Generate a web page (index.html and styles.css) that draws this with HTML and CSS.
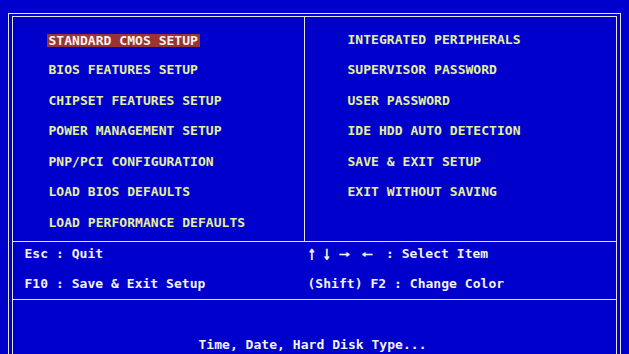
FILE: index.html
```html
<!DOCTYPE html>
<html lang="en">
<head>
    <meta charset="UTF-8">
    <title>CMOS Setup Utility</title>
    <link rel="stylesheet" href="styles.css">
</head>
<body>
    <div class="frame-outer">
        <div class="frame-inner">
            <div class="menu">
                <ul class="menu-col menu-left">
                    <li><span class="selected">STANDARD CMOS SETUP</span></li>
                    <li>BIOS FEATURES SETUP</li>
                    <li>CHIPSET FEATURES SETUP</li>
                    <li>POWER MANAGEMENT SETUP</li>
                    <li>PNP/PCI CONFIGURATION</li>
                    <li>LOAD BIOS DEFAULTS</li>
                    <li>LOAD PERFORMANCE DEFAULTS</li>
                </ul>
                <ul class="menu-col menu-right">
                    <li>INTEGRATED PERIPHERALS</li>
                    <li>SUPERVISOR PASSWORD</li>
                    <li>USER PASSWORD</li>
                    <li>IDE HDD AUTO DETECTION</li>
                    <li>SAVE &amp; EXIT SETUP</li>
                    <li>EXIT WITHOUT SAVING</li>
                </ul>
            </div>
            <div class="keys">
                <div class="key">Esc : Quit</div>
                <div class="key"><span class="arr arr-v">↑</span> <span class="arr arr-v">↓</span> <span class="arr arr-h">→</span>  <span class="arr arr-h">←</span>  : Select Item</div>
                <div class="key">F10 : Save &amp; Exit Setup</div>
                <div class="key">(Shift) F2 : Change Color</div>
            </div>
            <div class="help">Time, Date, Hard Disk Type...</div>
        </div>
    </div>
</body>
</html>
```

FILE: styles.css
```css
:root {
    --bios-blue: #0000CC;
    --bios-line: #E2E2F4;
    --bios-yellow: #E4F09C;
    --bios-white: #F2F2F2;
    --bios-red: #9C3232;
}
* {
    box-sizing: border-box;
}
body {
    margin: 0;
    height: 354px;
    overflow: hidden;
    background: var(--bios-blue);
    font-family: "DejaVu Sans Mono", "Liberation Mono", monospace;
    font-weight: bold;
    font-size: 13px;
    letter-spacing: 0.04px;
}
.frame-outer {
    margin: 13px 0 0 8px;
    width: 613px;
    height: 400px;
    border: 1px solid var(--bios-line);
    padding: 2px 3px 3px 3px;
}
.frame-inner {
    height: 100%;
    border: 1px solid var(--bios-line);
}
.menu {
    display: grid;
    grid-template-columns: 292px 1fr;
    height: 225px;
    border-bottom: 1px solid var(--bios-line);
}
.menu-col {
    list-style: none;
    margin: 0;
    padding-top: 7.75px;
    line-height: 30.5px;
    color: var(--bios-yellow);
    white-space: nowrap;
}
.menu-left {
    padding-left: 35.5px;
    border-right: 1px solid var(--bios-line);
}
.menu-right {
    padding-left: 42.5px;
}
.selected {
    display: inline-block;
    line-height: 13px;
    padding: 0 2px;
    margin-left: -2px;
    vertical-align: middle;
    background: var(--bios-red);
    color: var(--bios-white);
}
.keys {
    display: grid;
    grid-template-columns: 283px 1fr;
    row-gap: 8px;
    padding: 1px 0 4px 11.5px;
    line-height: 22px;
    color: var(--bios-white);
    border-bottom: 1px solid var(--bios-line);
}
.key {
    white-space: pre;
}
.arr {
    display: inline-block;
    width: 1ch;
}
.arr-v {
    transform: scale(1.1, 1.6);
}
.arr-h {
    transform: scaleX(1.45);
    transform-origin: left center;
}
.help {
    padding: 33.5px 4px 0 0;
    line-height: 22px;
    text-align: center;
    color: var(--bios-white);
}
```
